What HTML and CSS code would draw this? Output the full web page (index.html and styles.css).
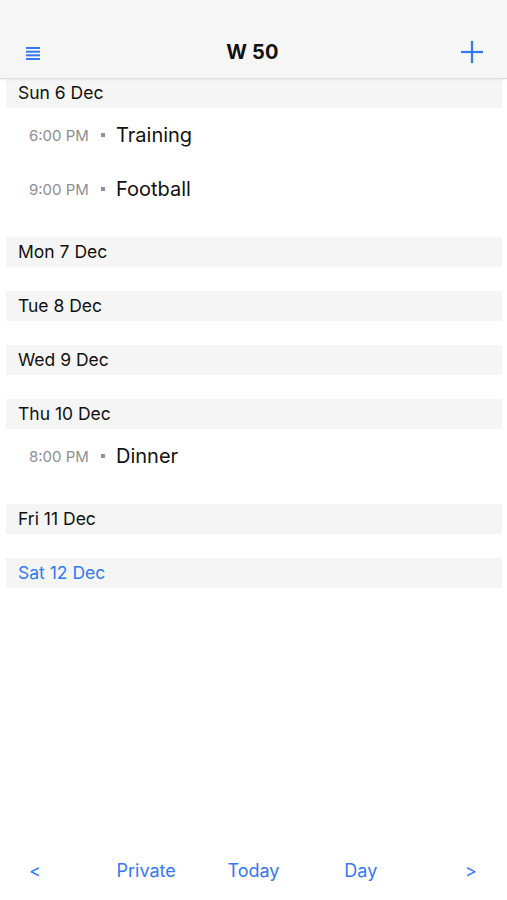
FILE: index.html
```html
<!DOCTYPE html>
<html>
<head>
<meta charset="utf-8">
<link rel="stylesheet" href="styles.css">
</head>
<body>
<div class="app">
  <header class="nav">
    <button class="nav-btn menu" aria-label="Menu">
      <svg width="14" height="15" viewBox="0 0 14 15"><g stroke="#3478f6" stroke-width="2"><line x1="0" y1="2" x2="14" y2="2"/><line x1="0" y1="5.7" x2="14" y2="5.7"/><line x1="0" y1="9.3" x2="14" y2="9.3"/><line x1="0" y1="13" x2="14" y2="13"/></g></svg>
    </button>
    <h1 class="title">W 50</h1>
    <button class="nav-btn add" aria-label="Add">
      <svg width="22" height="22" viewBox="0 0 22 22"><g stroke="#3478f6" stroke-width="2.2"><line x1="0" y1="11" x2="22" y2="11"/><line x1="11" y1="0" x2="11" y2="22"/></g></svg>
    </button>
  </header>

  <main class="list">
    <section class="day has-events">
      <div class="day-head">Sun 6 Dec</div>
      <div class="event"><span class="time">6:00 PM</span><span class="dot"></span><span class="name">Training</span></div>
      <div class="event"><span class="time">9:00 PM</span><span class="dot"></span><span class="name">Football</span></div>
    </section>
    <section class="day"><div class="day-head">Mon 7 Dec</div></section>
    <section class="day"><div class="day-head">Tue 8 Dec</div></section>
    <section class="day"><div class="day-head">Wed 9 Dec</div></section>
    <section class="day has-events">
      <div class="day-head">Thu 10 Dec</div>
      <div class="event"><span class="time">8:00 PM</span><span class="dot"></span><span class="name">Dinner</span></div>
    </section>
    <section class="day"><div class="day-head">Fri 11 Dec</div></section>
    <section class="day"><div class="day-head today">Sat 12 Dec</div></section>
  </main>

  <footer class="toolbar">
    <div class="tb-side left">&lt;</div>
    <div class="tb-mid">
      <span>Private</span>
      <span>Today</span>
      <span>Day</span>
    </div>
    <div class="tb-side right">&gt;</div>
  </footer>
</div>
</body>
</html>
```

FILE: styles.css
```css
* { box-sizing: border-box; }
html, body { margin: 0; padding: 0; background: #fff; }
body {
  font-family: Inter, "Liberation Sans", Arial, sans-serif;
  color: #111;
  width: 507px;
  height: 900px;
  overflow: hidden;
}
.app {
  display: flex;
  flex-direction: column;
  height: 900px;
}
.nav {
  height: 79px;
  padding: 26px 24px 0 22px;
  background: #f6f6f6;
  border-bottom: 1px solid #dedede;
  box-shadow: 0 1px 2px rgba(0,0,0,0.06);
  display: flex;
  align-items: center;
  justify-content: space-between;
  position: relative;
  z-index: 1;
}
.nav-btn {
  background: none;
  border: 0;
  padding: 0;
  display: flex;
  align-items: center;
}
.menu { padding-left: 4px; }
.menu svg { margin-top: 2px; }
.title {
  margin: 0 0 0 4px;
  font-size: 20px;
  font-weight: 700;
  letter-spacing: 0.2px;
  color: #111;
}
.list {
  flex: 1;
  padding: 0 5px 0 6px;
}
.day { margin-bottom: 24px; }
.day.has-events { margin-bottom: 21px; }
.day-head {
  height: 30px;
  background: #f5f5f5;
  padding-left: 12px;
  font-size: 17.5px;
  line-height: 30px;
  color: #111;
}
.day:first-child .day-head { height: 29px; line-height: 28px; }
.day-head.today { color: #2f7af5; }
.event {
  height: 54px;
  display: flex;
  align-items: center;
  padding-left: 23px;
}
.time {
  font-size: 15px;
  color: #8e8e93;
  width: 72px;
}
.dot {
  width: 4px;
  height: 4px;
  background: #8c91a8;
  margin-right: 11px;
}
.name {
  font-size: 20px;
  color: #111;
}
.toolbar {
  height: 62px;
  padding-top: 2px;
  display: grid;
  grid-template-columns: 1fr 322px 1fr;
  align-items: center;
  color: #3478f6;
  font-size: 18px;
}
.tb-mid {
  display: grid;
  grid-template-columns: 1fr 1fr 1fr;
  justify-items: center;
}
.tb-side.left { padding-left: 29px; }
.tb-side.right { text-align: right; padding-right: 30px; }
```
